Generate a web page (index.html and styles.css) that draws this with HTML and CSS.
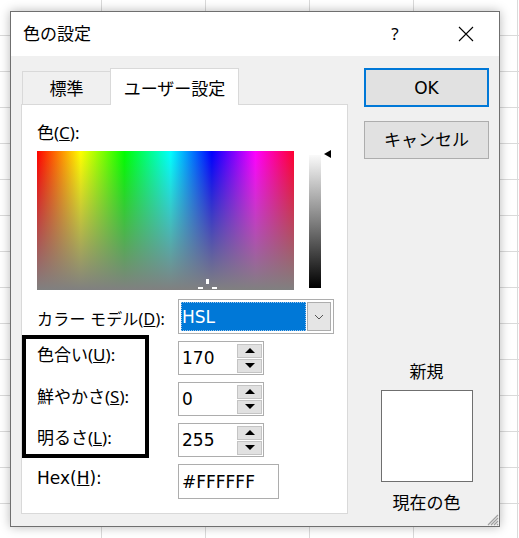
FILE: index.html
```html
<!DOCTYPE html>
<html lang="ja">
<head>
<meta charset="utf-8">
<title>色の設定</title>
<link rel="stylesheet" href="styles.css">
</head>
<body>
<div class="dialog">
  <div class="titlebar">
    <span class="title">色の設定</span>
    <span class="help">?</span>
    <span class="close"><svg width="16" height="16" viewBox="0 0 16 16"><path d="M1 1 L15 15 M15 1 L1 15" stroke="#000" stroke-width="1.1" fill="none"/></svg></span>
  </div>
  <div class="body">
    <div class="leftcol">
      <div class="tabs">
        <div class="tab">標準</div>
        <div class="tab active">ユーザー設定</div>
      </div>
      <div class="panel">
        <div class="lbl-color">色(<u>C</u>):</div>
        <div class="picker">
          <div class="spectrum">
            <span class="cross cross-v"></span>
            <span class="cross cross-l"></span>
            <span class="cross cross-r"></span>
          </div>
          <div class="lum"><span class="arrow"></span></div>
        </div>
        <div class="row row-model">
          <span class="lbl lbl-model">カラー モデル(<u>D</u>):</span>
          <div class="select">
            <div class="sel-val latin">HSL</div>
            <div class="sel-btn"><svg width="10" height="6" viewBox="0 0 10 6"><path d="M1 1 L5 5 L9 1" stroke="#555" stroke-width="1" fill="none"/></svg></div>
          </div>
        </div>
        <div class="row">
          <span class="lbl">色合い(<u>U</u>):</span>
          <div class="field">
            <span class="val latin">170</span>
            <div class="spin"><div class="sb"><span class="tri-up"></span></div><div class="sb"><span class="tri-down"></span></div></div>
          </div>
        </div>
        <div class="row">
          <span class="lbl lbl-low">鮮やかさ(<u>S</u>):</span>
          <div class="field">
            <span class="val latin">0</span>
            <div class="spin"><div class="sb"><span class="tri-up"></span></div><div class="sb"><span class="tri-down"></span></div></div>
          </div>
        </div>
        <div class="row">
          <span class="lbl lbl-low">明るさ(<u>L</u>):</span>
          <div class="field">
            <span class="val latin">255</span>
            <div class="spin"><div class="sb"><span class="tri-up"></span></div><div class="sb"><span class="tri-down"></span></div></div>
          </div>
        </div>
        <div class="row">
          <span class="lbl latin">Hex(<u>H</u>):</span>
          <div class="field field-hex">
            <span class="val latin">#FFFFFF</span>
          </div>
        </div>
      </div>
    </div>
    <div class="rightcol">
      <div class="btn btn-default latin">OK</div>
      <div class="btn btn-cancel">キャンセル</div>
      <div class="new-lbl">新規</div>
      <div class="swatch"></div>
      <div class="cur-lbl">現在の色</div>
    </div>
  </div>
  <svg class="grip" width="13" height="13" viewBox="0 0 13 13"><path d="M12 2 L2 12 M12 5 L5 12 M12 8 L8 12 M12 11 L11 12" stroke="#a0a0a0" stroke-width="1.2" fill="none"/></svg>
</div>
<div class="annot"></div>
</body>
</html>
```
FILE: styles.css
```css
html {
  margin: 0;
  height: 100%;
  background-color: #fff;
  background-image:
    linear-gradient(to right, #dadada 1px, transparent 1px),
    linear-gradient(to bottom, #dadada 1px, transparent 1px);
  background-size: 104px 36px;
  background-position: 101px 35px;
}
body {
  margin: 0;
  width: 519px;
  height: 538px;
  overflow: hidden;
  font-family: "Noto Sans", "Noto Sans CJK JP", sans-serif;
  font-size: 17px;
  color: #000;
}
.latin {
  font-family: "DejaVu Sans", "Noto Sans CJK JP", sans-serif;
}
.dialog {
  margin: 11px 0 0 10px;
  width: 490px;
  height: 516px;
  box-sizing: border-box;
  border: 1px solid #6f6f6f;
  background: #f0f0f0;
  box-shadow: 0 0 10px rgba(0, 0, 0, 0.28);
  display: flex;
  flex-direction: column;
  position: relative;
}
.titlebar {
  height: 44px;
  flex: none;
  background: #fff;
  display: flex;
  align-items: center;
  padding-left: 12px;
  line-height: 22px;
}
.title { flex: 1; }
.help {
  width: 20px;
  text-align: center;
  margin-right: 53px;
}
.close {
  display: flex;
  margin-right: 25px;
}
.body {
  flex: 1;
  display: flex;
  gap: 16px;
  padding: 12px 10px 13px 10px;
}
.leftcol {
  width: 327px;
  display: flex;
  flex-direction: column;
}
.tabs {
  display: flex;
  align-items: flex-end;
  height: 37px;
  padding-left: 1px;
  margin-bottom: -1px;
  position: relative;
  z-index: 1;
}
.tab {
  box-sizing: border-box;
  width: 88px;
  height: 34px;
  border: 1px solid #d9d9d9;
  border-right: none;
  background: #f0f0f0;
  display: flex;
  align-items: center;
  justify-content: center;
  line-height: 22px;
  padding-top: 1px;
}
.tab.active {
  width: 129px;
  height: 37px;
  border-right: 1px solid #d9d9d9;
  border-bottom: none;
  background: #fff;
  padding-top: 3px;
}
.panel {
  flex: 1;
  background: #fff;
  border: 1px solid #d9d9d9;
  padding-left: 15px;
}
.lbl-color {
  margin-top: 17px;
  line-height: 22px;
}
.picker {
  margin-top: 7px;
  display: flex;
  gap: 15px;
  height: 139px;
}
.spectrum {
  width: 257px;
  height: 139px;
  position: relative;
  background:
    linear-gradient(to bottom, rgba(128, 128, 128, 0) 0%, #808080 100%),
    linear-gradient(to right, #ff0000 0%, #ffff00 17%, #00ff00 34%, #00ffff 52%, #0000ff 68%, #ff00ff 85%, #ff0030 100%);
}
.cross {
  position: absolute;
  background: #fff;
}
.cross-v { left: 169px; top: 128px; width: 3px; height: 5px; }
.cross-l { left: 161px; top: 136px; width: 5px; height: 2px; }
.cross-r { left: 175px; top: 136px; width: 5px; height: 2px; }
.lum {
  width: 12px;
  height: 133px;
  margin-top: 4px;
  position: relative;
  background: linear-gradient(to bottom, #fafafa 0%, #808080 50%, #000 100%);
}
.arrow {
  position: absolute;
  left: 15px;
  top: -5px;
  width: 0;
  height: 0;
  border-right: 7px solid #000;
  border-top: 4px solid transparent;
  border-bottom: 4px solid transparent;
}
.row {
  display: flex;
  align-items: flex-start;
  margin-top: 7px;
}
.row-model { margin-top: 9px; }
.lbl {
  width: 141px;
  flex: none;
  line-height: 22px;
  padding-top: 3px;
  white-space: nowrap;
}
.lbl-low { padding-top: 4px; }
.lbl-model {
  padding-top: 9px;
  font-size: 16px;
  letter-spacing: 0.2px;
}
.select {
  box-sizing: border-box;
  width: 156px;
  height: 35px;
  border: 1px solid #adadad;
  padding: 2px;
  display: flex;
  gap: 1px;
  background: #fff;
}
.sel-val {
  flex: 1;
  background: #0078d7;
  color: #fff;
  outline: 1px dotted #9fc6ea;
  outline-offset: -1px;
  display: flex;
  align-items: center;
  padding-left: 1px;
  line-height: 22px;
}
.sel-btn {
  width: 24px;
  box-sizing: border-box;
  background: #e5e5e5;
  border: 1px solid #adadad;
  display: flex;
  align-items: center;
  justify-content: center;
}
.field {
  box-sizing: border-box;
  width: 86px;
  height: 34px;
  border: 1px solid #adadad;
  background: #fff;
  display: flex;
  align-items: center;
}
.field-hex {
  width: 101px;
  height: 35px;
}
.val {
  flex: 1;
  padding-left: 3px;
  line-height: 22px;
}
.spin {
  width: 25px;
  height: 29px;
  margin-right: 1px;
  display: flex;
  flex-direction: column;
  gap: 1px;
}
.sb {
  flex: 1;
  box-sizing: border-box;
  background: #e1e1e1;
  border: 1px solid #c4c4c4;
  display: flex;
  align-items: center;
  justify-content: center;
}
.tri-up, .tri-down {
  width: 0;
  height: 0;
  border-left: 5px solid transparent;
  border-right: 5px solid transparent;
}
.tri-up { border-bottom: 5px solid #000; }
.tri-down { border-top: 5px solid #000; }
.rightcol {
  width: 125px;
  display: flex;
  flex-direction: column;
  align-items: center;
}
.btn {
  box-sizing: border-box;
  width: 125px;
  background: #e1e1e1;
  border: 1px solid #adadad;
  display: flex;
  align-items: center;
  justify-content: center;
  line-height: 22px;
}
.btn-default {
  height: 39px;
  border: 2px solid #0078d7;
}
.btn-cancel {
  height: 38px;
  margin-top: 14px;
}
.new-lbl {
  margin-top: 202px;
  line-height: 22px;
}
.swatch {
  box-sizing: border-box;
  width: 92px;
  height: 92px;
  margin-top: 7px;
  border: 1px solid #6f6f6f;
  background: #fff;
}
.cur-lbl {
  margin-top: 10px;
  line-height: 22px;
}
.grip {
  position: absolute;
  right: 0;
  bottom: 0;
}
.annot {
  position: absolute;
  left: 22px;
  top: 335px;
  width: 127px;
  height: 123px;
  box-sizing: border-box;
  border: 4px solid #000;
}
```
